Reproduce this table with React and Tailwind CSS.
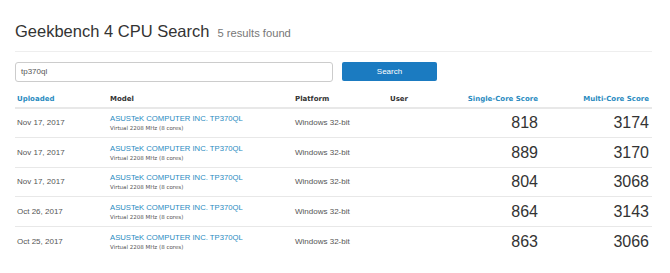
import React from "react";

const rows = [
  { date: "Nov 17, 2017", single: 818, multi: 3174 },
  { date: "Nov 17, 2017", single: 889, multi: 3170 },
  { date: "Nov 17, 2017", single: 804, multi: 3068 },
  { date: "Oct 26, 2017", single: 864, multi: 3143 },
  { date: "Oct 25, 2017", single: 863, multi: 3066 },
];

const arial = "font-['Liberation_Sans',Arial,sans-serif]";
const verdana = "font-['DejaVu_Sans',Verdana,sans-serif]";

export default function App() {
  return (
    <div className={`w-[670px] h-[273px] bg-white overflow-hidden text-[#333] ${arial}`}>
      <div className="pl-[15px] pr-[18px] pt-[21px]">
        <h1 className="flex items-baseline gap-[8px] pb-[9px] border-b border-[#eeeeee]">
          <span className="text-[16.5px] leading-[20px] text-[#333] font-normal">Geekbench 4 CPU Search</span>
          <span className="text-[11.2px] text-[#777]">5 results found</span>
        </h1>

        <div className="flex items-center gap-[9px] mt-[10px]">
          <div className="w-[318px] h-[20px] border border-[#cccccc] rounded-[3px] flex items-center px-[5px] text-[8px] text-[#555]">
            tp370ql
          </div>
          <button className="w-[95px] h-[19px] bg-[#1b7bc1] rounded-[2px] text-white text-[8px]">Search</button>
        </div>

        <div className="mt-[9px]">
          <div className={`flex items-center h-[18px] border-b-2 border-[#e8e8e8] text-[#333] font-bold text-[7px] ${verdana}`}>
            <div className="w-[95px] pl-[2px] text-[#2a8bbf]">Uploaded</div>
            <div className="w-[185px]">Model</div>
            <div className="w-[95px]">Platform</div>
            <div className="w-[62px]">User</div>
            <div className="w-[86px] text-right text-[#2a8bbf]">Single-Core Score</div>
            <div className="w-[111px] text-right text-[#2a8bbf]">Multi-Core Score</div>
          </div>
          {rows.map((r, i) => (
            <div key={i} className={`flex items-center h-[29.5px] ${i < rows.length - 1 ? "border-b border-[#e8e8e8]" : ""}`}>
              <div className="w-[95px] pl-[2px] text-[8px] text-[#555]">{r.date}</div>
              <div className="w-[185px] flex flex-col">
                <span className="text-[7.7px] leading-[11px] text-[#2a8bbf]">ASUSTeK COMPUTER INC. TP370QL</span>
                <span className={`text-[5.5px] leading-[9px] text-[#555] ${verdana}`}>Virtual 2208 MHz (8 cores)</span>
              </div>
              <div className="w-[95px] text-[8px] text-[#555]">Windows 32-bit</div>
              <div className="w-[62px]"></div>
              <div className="w-[86px] text-right text-[16px] text-[#333]">{r.single}</div>
              <div className="w-[111px] text-right text-[16px] text-[#333]">{r.multi}</div>
            </div>
          ))}
        </div>
      </div>
    </div>
  );
}
